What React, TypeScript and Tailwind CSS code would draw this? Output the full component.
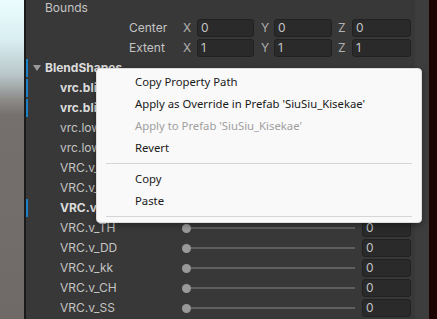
const FONT = "font-['Inter','Liberation_Sans',sans-serif]"

interface BlendRow {
  name: string
  bold?: boolean
  overridden?: boolean
}

const BLEND_ROWS: BlendRow[] = [
  { name: 'vrc.blink_left', bold: true, overridden: true },
  { name: 'vrc.blink_right', bold: true, overridden: true },
  { name: 'vrc.lowerlid_left' },
  { name: 'vrc.lowerlid_right' },
  { name: 'VRC.v_sil' },
  { name: 'VRC.v_PP' },
  { name: 'VRC.v_FF', bold: true, overridden: true },
  { name: 'VRC.v_TH' },
  { name: 'VRC.v_DD' },
  { name: 'VRC.v_kk' },
  { name: 'VRC.v_CH' },
  { name: 'VRC.v_SS' },
]

function Field({ value, className }: { value: string; className: string }) {
  return (
    <div
      className={`flex h-[18px] items-center rounded-[3px] border border-[#212121] bg-[#2a2a2a] pl-[3px] text-[12px] text-[#c4c4c4] ${className}`}
    >
      {value}
    </div>
  )
}

function Bar({ on }: { on?: boolean }) {
  return <div className={`my-px w-[2px] self-stretch ${on ? 'bg-[#1b80c4]' : ''}`} />
}

function VectorRow({ label, v }: { label: string; v: string }) {
  return (
    <div className="flex h-5 items-center">
      <Bar />
      <div className="w-[101px]" />
      <span className="w-[54px] text-[#c4c4c4]">{label}</span>
      <span className="w-[14px] text-[#b0b0b0]">X</span>
      <Field value={v} className="w-[57px]" />
      <span className="ml-[7px] w-[13px] text-[#b0b0b0]">Y</span>
      <Field value={v} className="w-[58px]" />
      <span className="ml-[6px] w-[14px] text-[#b0b0b0]">Z</span>
      <Field value={v} className="w-[59px]" />
    </div>
  )
}

function SliderRow({ row }: { row: BlendRow }) {
  return (
    <div className="flex h-5 items-center">
      <Bar on={row.overridden} />
      <span
        className={`ml-[32px] w-[122px] overflow-hidden whitespace-nowrap ${row.bold ? 'font-bold text-[#dcdcdc]' : 'text-[#c4c4c4]'}`}
      >
        {row.name}
      </span>
      <div className="relative flex h-[10px] w-[173px] items-center">
        <div className="h-[2px] w-full bg-[#5e5e5e]" />
        <div className="absolute left-0 h-[9px] w-[9px] rounded-full bg-[#999999]" />
      </div>
      <Field value="0" className="ml-[7px] w-[49px]" />
    </div>
  )
}

function MenuItem({ label, disabled }: { label: string; disabled?: boolean }) {
  return (
    <div className={`flex h-[22px] items-center pl-[38px] ${disabled ? 'text-[#a0a0a0]' : 'text-[#1a1a1a]'}`}>
      {label}
    </div>
  )
}

export default function App() {
  return (
    <div className={`relative flex h-[319px] w-[437px] overflow-hidden text-[12px] ${FONT}`}>
      {/* scene view sliver */}
      <div className="w-[24px] bg-[linear-gradient(to_bottom,#ecfdfe_0%,#d8eef1_40px,#b9c6c9_75px,#8c8a88_100px,#75706d_115px,#6f6a67_100%)]" />
      <div className="w-[2px] bg-[#1b1b1b]" />

      {/* inspector */}
      <div className="flex w-[389px] flex-col bg-[#383838]">
        <div className="-mt-[2px] flex flex-col">
          <div className="flex h-5 items-center">
            <Bar />
            <span className="ml-[17px] text-[#c4c4c4]">Bounds</span>
          </div>
          <VectorRow label="Center" v="0" />
          <VectorRow label="Extent" v="1" />
          <div className="flex h-5 items-center">
            <Bar on />
            <svg width="8" height="6" viewBox="0 0 8 6" className="ml-[5px]">
              <path d="M0 0H8L4 6Z" fill="#9a9a9a" />
            </svg>
            <span className="ml-[4px] font-bold text-[#dcdcdc]">BlendShapes</span>
          </div>
          {BLEND_ROWS.map((r) => (
            <SliderRow key={r.name} row={r} />
          ))}
        </div>
      </div>

      {/* scrollbar gutter + next window */}
      <div className="w-[14px] bg-[#3d3d3d]" />
      <div className="flex-1 bg-[#1c0404]" />

      {/* context menu */}
      <div className="absolute left-[96px] top-[68px] w-[326px] rounded-[4px] border border-[#dedede] bg-[#f9f9f9] pt-[2px] pb-[5px] font-['Noto_Sans','Liberation_Sans',sans-serif] text-[11.3px] shadow-[0_2px_6px_rgba(0,0,0,0.35)]">
        <MenuItem label="Copy Property Path" />
        <MenuItem label="Apply as Override in Prefab 'SiuSiu_Kisekae'" />
        <MenuItem label="Apply to Prefab 'SiuSiu_Kisekae'" disabled />
        <MenuItem label="Revert" />
        <div className="mx-[9px] my-[4px] h-px bg-[#d6d6d6]" />
        <MenuItem label="Copy" />
        <MenuItem label="Paste" />
        <div className="mx-[9px] mt-[4px] h-px bg-[#d6d6d6]" />
      </div>
    </div>
  )
}
